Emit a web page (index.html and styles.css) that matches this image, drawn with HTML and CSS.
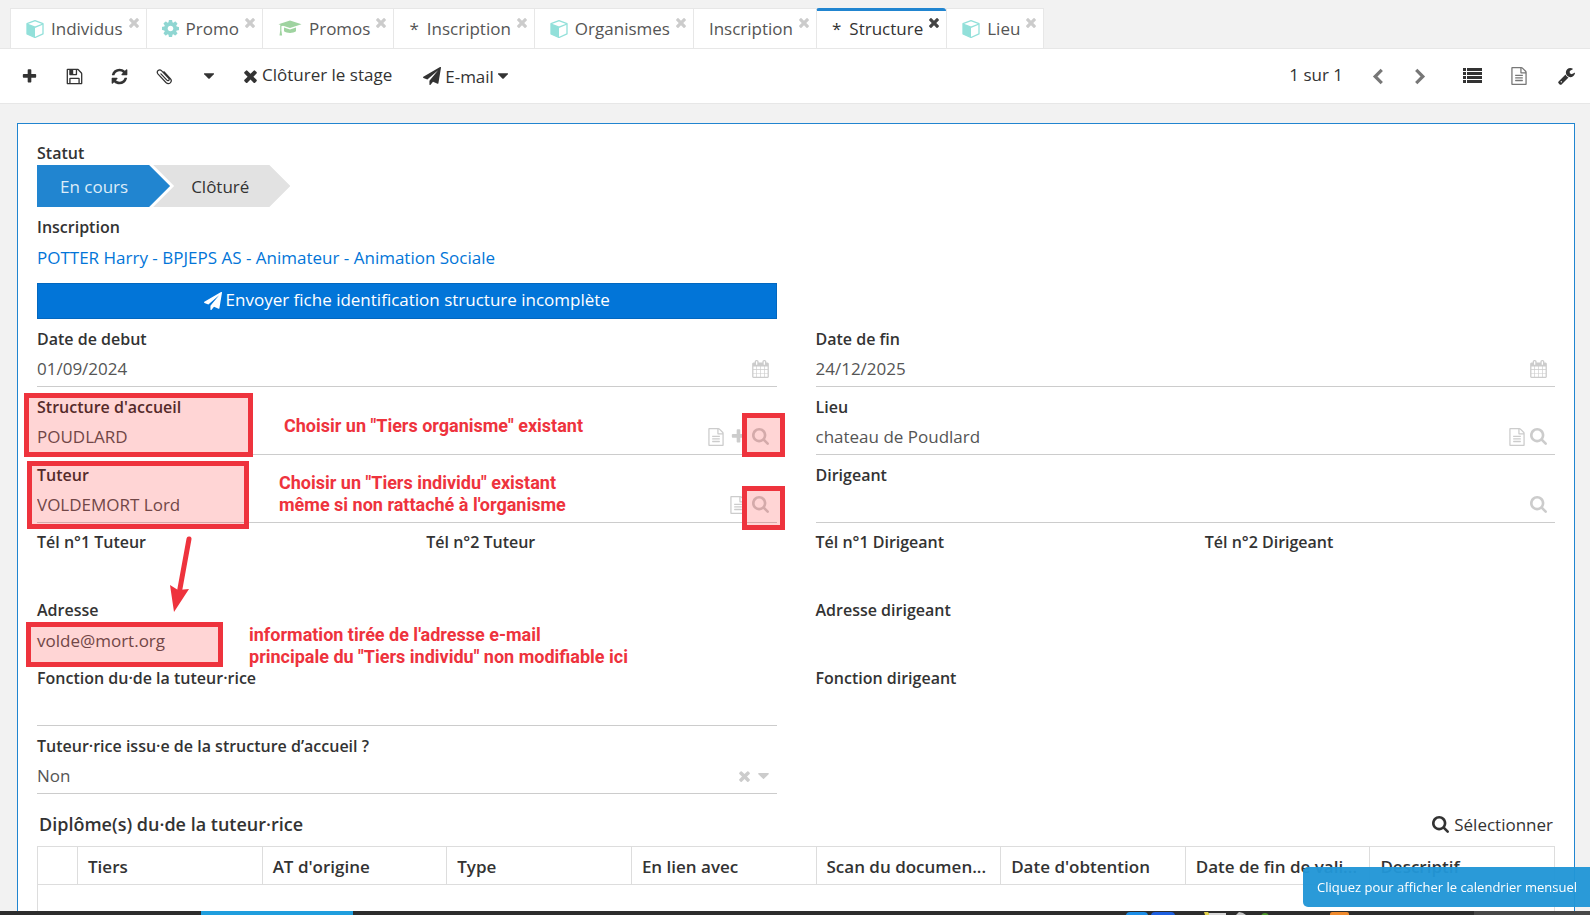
FILE: index.html
```html
<!DOCTYPE html>
<html lang="fr">
<head>
<meta charset="utf-8">
<title>Structure</title>
<link rel="stylesheet" href="styles.css">
</head>
<body>
<svg class="sprite" aria-hidden="true">
  <symbol id="i-plus" viewBox="0 0 1792 1792"><path d="M1600 736v192q0 40-28 68t-68 28h-416v416q0 40-28 68t-68 28h-192q-40 0-68-28t-28-68v-416h-416q-40 0-68-28t-28-68v-192q0-40 28-68t68-28h416v-416q0-40 28-68t68-28h192q40 0 68 28t28 68v416h416q40 0 68 28t28 68z"/></symbol>
  <symbol id="i-times" viewBox="302 238 1188 1316"><path d="M1490 1322q0 40-28 68l-136 136q-28 28-68 28t-68-28l-294-294-294 294q-28 28-68 28t-68-28l-136-136q-28-28-28-68t28-68l294-294-294-294q-28-28-28-68t28-68l136-136q28-28 68-28t68 28l294 294 294-294q28-28 68-28t68 28l136 136q28 28 28 68t-28 68l-294 294 294 294q28 28 28 68z"/></symbol>
  <symbol id="i-refresh" viewBox="64 64 1664 1664"><path d="M1639 1056q0 5-1 7-64 268-268 434.500t-478 166.500q-146 0-282.500-55t-243.500-157l-129 129q-19 19-45 19t-45-19-19-45v-448q0-26 19-45t45-19h448q26 0 45 19t19 45-19 45l-137 137q71 66 161 102t187 36q134 0 250-65t186-179q11-17 53-117 8-23 30-23h192q13 0 22.500 9.500t9.500 22.500zm25-800v448q0 26-19 45t-45 19h-448q-26 0-45-19t-19-45 19-45l138-138q-148-137-349-137-134 0-250 65t-186 179q-11 17-53 117-8 23-30 23h-199q-13 0-22.500-9.500t-9.500-22.500v-7q65-268 270-434.500t480-166.500q146 0 284 55.500t245 156.500l130-129q19-19 45-19t45 19 19 45z"/></symbol>
  <symbol id="i-save" viewBox="64 64 1664 1664"><path d="M512 1536h768v-384h-768v384zm896 0h128v-896q0-14-10-38.500t-20-34.500l-281-281q-10-10-34-20t-39-10v416q0 40-28 68t-68 28h-576q-40 0-68-28t-28-68v-416h-128v1280h128v-416q0-40 28-68t68-28h832q40 0 68 28t28 68v416zm-384-928v-320q0-13-9.500-22.500t-22.500-9.500h-192q-13 0-22.500 9.500t-9.500 22.500v320q0 13 9.500 22.500t22.500 9.500h192q13 0 22.500-9.500t9.500-22.500zm640 32v928q0 40-28 68t-68 28h-1344q-40 0-68-28t-28-68v-1344q0-40 28-68t68-28h928q40 0 88 20t76 48l280 280q28 28 48 76t20 88z"/></symbol>
  <symbol id="i-clip" viewBox="0 0 18 18"><path d="M5.200 6.200l6.300 6.600c1.400 1.500 3.300-.3 2-1.800L6 3C3.500.4-.2 3.700 2.200 6.400l8.300 8.900c3.200 3.200 7.500-.7 4.700-4.100L8.400 4" fill="none" stroke="currentColor" stroke-width="1.300" stroke-linecap="round"/></symbol>
  <symbol id="i-caret" viewBox="384 640 1024 576"><path d="M1408 704q0 26-19 45l-448 448q-19 19-45 19t-45-19l-448-448q-19-19-19-45t19-45 45-19h896q26 0 45 19t19 45z"/></symbol>
  <symbol id="i-plane" viewBox="0 0 1792 1792"><path d="M1764 11q33 24 27 64l-256 1536q-5 29-32 45-14 8-31 8-11 0-24-5l-453-185-242 295q-18 23-49 23-13 0-22-4-19-7-30.500-23.500t-11.500-36.500v-349l864-1059-1069 925-395-162q-37-14-40-55-2-40 32-59l1664-960q15-9 32-9 20 0 36 11z"/></symbol>
  <symbol id="i-left" viewBox="0 0 12 18"><path d="M10 2L3 9l7 7" fill="none" stroke="currentColor" stroke-width="3.400"/></symbol>
  <symbol id="i-right" viewBox="0 0 12 18"><path d="M2 2l7 7-7 7" fill="none" stroke="currentColor" stroke-width="3.400"/></symbol>
  <symbol id="i-list" viewBox="0 0 19 16"><path d="M0 0h3v3H0zM4 0h15v3H4zM0 4h3v3H0zM4 4h15v3H4zM0 8h3v3H0zM4 8h15v3H4zM0 12h3v3H0zM4 12h15v3H4z"/></symbol>
  <symbol id="i-file" viewBox="128 0 1536 1792"><path d="M1596 380q28 28 48 76t20 88v1152q0 40-28 68t-68 28h-1344q-40 0-68-28t-28-68v-1600q0-40 28-68t68-28h896q40 0 88 20t76 48zm-444-244v376h376q-10-29-22-41l-313-313q-12-12-41-22zm384 1528v-1024h-416q-40 0-68-28t-28-68v-416h-768v1536h1280zm-1024-864q0-14 9-23t23-9h704q14 0 23 9t9 23v64q0 14-9 23t-23 9h-704q-14 0-23-9t-9-23v-64zm736 224q14 0 23 9t9 23v64q0 14-9 23t-23 9h-704q-14 0-23-9t-9-23v-64q0-14 9-23t23-9h704zm0 256q14 0 23 9t9 23v64q0 14-9 23t-23 9h-704q-14 0-23-9t-9-23v-64q0-14 9-23t23-9h704z"/></symbol>
  <symbol id="i-wrench" viewBox="64 128 1664 1664"><path d="M448 1472q0-26-19-45t-45-19-45 19-19 45 19 45 45 19 45-19 19-45zm644-420l-682 682q-37 37-90 37-52 0-91-37l-106-108q-38-36-38-90 0-53 38-91l681-681q39 98 114.500 173.500t173.500 114.500zm634-435q0 39-23 106-47 134-164.500 217.500t-258.500 83.500q-185 0-316.500-131.500t-131.500-316.500 131.500-316.500 316.500-131.500q58 0 121.500 16.500t107.500 46.500q16 11 16 28t-16 28l-293 169v224l193 107q5-3 79-48.500t135.500-81 70.500-35.500q15 0 23.500 10t8.500 25z"/></symbol>
  <symbol id="i-search" viewBox="64 128 1664 1664"><path d="M1216 832q0-185-131.500-316.500t-316.500-131.500-316.500 131.500-131.500 316.500 131.500 316.500 316.500 131.500 316.500-131.500 131.500-316.500zm512 832q0 52-38 90t-90 38q-54 0-90-38l-343-342q-179 124-399 124-143 0-273.500-55.500t-225-150-150-225-55.500-273.500 55.500-273.500 150-225 225-150 273.500-55.500 273.500 55.500 225 150 150 225 55.500 273.500q0 220-124 399l343 343q37 37 37 90z"/></symbol>
  <symbol id="i-calendar" viewBox="64 0 1664 1792"><path d="M192 1664h288v-288h-288v288zm352 0h320v-288h-320v288zm-352-352h288v-320h-288v320zm352 0h320v-320h-320v320zm-352-384h288v-288h-288v288zm736 736h320v-288h-320v288zm-384-736h320v-288h-320v288zm768 736h288v-288h-288v288zm-384-352h320v-320h-320v320zm-352-864v-288q0-13-9.500-22.500t-22.500-9.500h-64q-13 0-22.500 9.500t-9.500 22.500v288q0 13 9.500 22.500t22.500 9.500h64q13 0 22.500-9.500t9.500-22.500zm736 864h288v-320h-288v320zm-384-384h320v-288h-320v288zm384 0h288v-288h-288v288zm32-480v-288q0-13-9.500-22.500t-22.500-9.500h-64q-13 0-22.500 9.500t-9.500 22.500v288q0 13 9.500 22.500t22.500 9.500h64q13 0 22.500-9.500t9.500-22.500zm384-64v1280q0 52-38 90t-90 38h-1408q-52 0-90-38t-38-90v-1280q0-52 38-90t90-38h128v-96q0-66 47-113t113-47h64q66 0 113 47t47 113v96h384v-96q0-66 47-113t113-47h64q66 0 113 47t47 113v96h128q52 0 90 38t38 90z"/></symbol>
  <symbol id="i-cog" viewBox="128 128 1536 1536"><path d="M1152 896q0-106-75-181t-181-75-181 75-75 181 75 181 181 75 181-75 75-181zm512-109v222q0 12-8 23t-20 13l-185 28q-19 54-39 91 35 50 107 138 10 12 10 25t-9 23q-27 37-99 108t-94 71q-12 0-26-9l-138-108q-44 23-91 38-16 136-29 186-7 28-36 28h-222q-14 0-24.500-8.500t-11.500-21.500l-28-184q-49-16-90-37l-141 107q-10 9-25 9-14 0-25-11-126-114-165-168-7-10-7-23 0-12 8-23 15-21 51-66.500t54-70.500q-27-50-41-99l-183-27q-13-2-21-12.500t-8-23.500v-222q0-12 8-23t19-13l186-28q14-46 39-92-40-57-107-138-10-12-10-24 0-10 9-23 26-36 98.500-107.500t94.500-71.500q13 0 26 10l138 107q44-23 91-38 16-136 29-186 7-28 36-28h222q14 0 24.500 8.500t11.500 21.500l28 184q49 16 90 37l142-107q9-9 24-9 13 0 25 10 129 119 165 170 7 8 7 22 0 12-8 23-15 21-51 66.500t-54 70.500q26 50 41 98l183 28q13 2 21 12.500t8 23.500z"/></symbol>
  <symbol id="i-cube" viewBox="0 0 18 18"><path d="M9 .700l8 3v10.200l-8 3.600-8-3.600V3.700z" fill="none" stroke="currentColor" stroke-width="1.300" stroke-linejoin="round"/><path d="M1 4l8 3.200v10.300L1 13.900z"/><path d="M1 4l8 3.200L17 4" fill="none" stroke="currentColor" stroke-width="1.300"/></symbol>
  <symbol id="i-cap" viewBox="0 0 24 17"><path d="M12 .500L23.500 4.200 12 8 .500 4.200z"/><path d="M6 7.500l6 2 6-2v3.800c-3 2.300-9 2.300-12 0z"/><path d="M2.200 5v1.500c1.200 0 2-.9 5-1.300L12 4.500 7 4.300C4 4.700 2.200 5 2.200 6v4.500L1.500 15.500h2.600L3.400 10.500V6z"/></symbol>
</svg>

<nav class="tabs">
  <div class="tab"><svg class="cube"><use href="#i-cube"/></svg><a href="#">Individus</a><button class="close" aria-label="Fermer"><svg><use href="#i-times"/></svg></button></div>
  <div class="tab"><svg class="cog"><use href="#i-cog"/></svg><a href="#">Promo</a><button class="close" aria-label="Fermer"><svg><use href="#i-times"/></svg></button></div>
  <div class="tab"><svg class="cap"><use href="#i-cap"/></svg><a href="#">Promos</a><button class="close" aria-label="Fermer"><svg><use href="#i-times"/></svg></button></div>
  <div class="tab"><span class="star">*</span><a href="#">Inscription</a><button class="close" aria-label="Fermer"><svg><use href="#i-times"/></svg></button></div>
  <div class="tab"><svg class="cube"><use href="#i-cube"/></svg><a href="#">Organismes</a><button class="close" aria-label="Fermer"><svg><use href="#i-times"/></svg></button></div>
  <div class="tab"><a href="#">Inscription</a><button class="close" aria-label="Fermer"><svg><use href="#i-times"/></svg></button></div>
  <div class="tab active"><span class="star">*</span><a href="#">Structure</a><button class="close" aria-label="Fermer"><svg><use href="#i-times"/></svg></button></div>
  <div class="tab"><svg class="cube"><use href="#i-cube"/></svg><a href="#">Lieu</a><button class="close" aria-label="Fermer"><svg><use href="#i-times"/></svg></button></div>
</nav>

<header class="toolbar">
  <button aria-label="Nouveau"><svg><use href="#i-plus"/></svg></button>
  <button aria-label="Enregistrer"><svg><use href="#i-save"/></svg></button>
  <button aria-label="Actualiser"><svg><use href="#i-refresh"/></svg></button>
  <button aria-label="Joindre"><svg><use href="#i-clip"/></svg></button>
  <button class="small" aria-label="Plus d'actions"><svg class="caret"><use href="#i-caret"/></svg></button>
  <button class="text"><svg class="cross"><use href="#i-times"/></svg><span class="raised">Clôturer le stage</span></button>
  <button class="text mail"><svg><use href="#i-plane"/></svg>E-mail<svg class="caret"><use href="#i-caret"/></svg></button>
  <div class="pager">
    <span class="raised">1 sur 1</span>
    <button class="grey" aria-label="Précédent"><svg class="chev"><use href="#i-left"/></svg></button>
    <button class="grey" aria-label="Suivant"><svg class="chev"><use href="#i-right"/></svg></button>
  </div>
  <div class="views">
    <button aria-label="Liste"><svg class="list"><use href="#i-list"/></svg></button>
    <button class="grey" aria-label="Formulaire"><svg class="doc"><use href="#i-file"/></svg></button>
    <button class="tools" aria-label="Outils"><svg><use href="#i-wrench"/></svg></button>
  </div>
</header>

<main class="card">
  <form class="form">
    <div class="field wide">
      <span class="label">Statut</span>
      <div class="steps"><span class="step current">En cours</span><span class="step next">Clôturé</span></div>
    </div>
    <div class="field wide">
      <span class="label">Inscription</span>
      <p class="value"><a href="#">POTTER Harry - BPJEPS AS - Animateur - Animation Sociale</a></p>
    </div>
    <button type="button" class="send"><svg><use href="#i-plane"/></svg><span class="raised">Envoyer fiche identification structure incomplète</span></button>

    <div class="field left">
      <label class="label" for="debut">Date de debut</label>
      <div class="control"><input id="debut" value="01/09/2024"><button type="button" aria-label="Calendrier"><svg class="cal"><use href="#i-calendar"/></svg></button></div>
    </div>
    <div class="field">
      <label class="label" for="fin">Date de fin</label>
      <div class="control"><input id="fin" value="24/12/2025"><button type="button" aria-label="Calendrier"><svg class="cal"><use href="#i-calendar"/></svg></button></div>
    </div>

    <div class="field">
      <label class="label" for="structure">Structure d'accueil</label>
      <div class="control"><input id="structure" value="POUDLARD"><button type="button" aria-label="Ouvrir"><svg class="doc"><use href="#i-file"/></svg></button><button type="button" aria-label="Ajouter"><svg><use href="#i-plus"/></svg></button><button type="button" aria-label="Rechercher"><svg><use href="#i-search"/></svg></button></div>
      <span class="mark mark-structure"></span>
      <span class="mark mark-search"></span>
      <p class="note note-structure">Choisir un "Tiers organisme" existant</p>
    </div>
    <div class="field">
      <label class="label" for="lieu">Lieu</label>
      <div class="control"><input id="lieu" value="chateau de Poudlard"><button type="button" aria-label="Ouvrir"><svg class="doc"><use href="#i-file"/></svg></button><button type="button" aria-label="Rechercher"><svg><use href="#i-search"/></svg></button></div>
    </div>

    <div class="field">
      <label class="label" for="tuteur">Tuteur</label>
      <div class="control"><input id="tuteur" value="VOLDEMORT Lord"><button type="button" aria-label="Ouvrir"><svg class="doc"><use href="#i-file"/></svg></button><button type="button" aria-label="Rechercher"><svg><use href="#i-search"/></svg></button></div>
      <span class="mark mark-tuteur"></span>
      <span class="mark mark-search low"></span>
      <p class="note note-tuteur">Choisir un "Tiers individu" existant<br>même si non rattaché à l'organisme</p>
      <svg class="arrow" viewBox="0 0 26 78"><path d="M19 3L9 58" fill="none" stroke="#ee333d" stroke-width="5" stroke-linecap="round"/><path d="M0 49l8 5 11-1L4 76z"/></svg>
    </div>
    <div class="field">
      <label class="label" for="dirigeant">Dirigeant</label>
      <div class="control"><input id="dirigeant"><button type="button" aria-label="Rechercher"><svg><use href="#i-search"/></svg></button></div>
    </div>

    <div class="pair"><span class="label">Tél n°1 Tuteur</span><span class="label">Tél n°2 Tuteur</span></div>
    <div class="pair"><span class="label">Tél n°1 Dirigeant</span><span class="label">Tél n°2 Dirigeant</span></div>

    <div class="field">
      <span class="label">Adresse</span>
      <p class="value">volde@mort.org</p>
      <span class="mark mark-adresse"></span>
      <p class="note note-adresse">information tirée de l'adresse e-mail<br>principale du "Tiers individu" non modifiable ici</p>
    </div>
    <div class="field"><span class="label">Adresse dirigeant</span></div>

    <div class="field">
      <label class="label" for="fonction">Fonction du·de la tuteur·rice</label>
      <div class="control"><input id="fonction"></div>
    </div>
    <div class="field"><span class="label">Fonction dirigeant</span></div>

    <div class="field">
      <label class="label" for="issu">Tuteur·rice issu·e de la structure d’accueil ?</label>
      <div class="control choice"><select id="issu"><option>Non</option></select><button type="button" aria-label="Effacer"><svg class="clear"><use href="#i-times"/></svg></button><svg class="caret"><use href="#i-caret"/></svg></div>
    </div>
  </form>

  <section class="panel">
    <div class="panel-head"><h2>Diplôme(s) du·de la tuteur·rice</h2><button class="select"><svg><use href="#i-search"/></svg>Sélectionner</button></div>
    <table>
      <thead><tr><th class="pick"></th><th>Tiers</th><th>AT d'origine</th><th>Type</th><th>En lien avec</th><th>Scan du documen...</th><th>Date d'obtention</th><th>Date de fin de vali...</th><th>Descriptif</th></tr></thead>
      <tbody><tr><td colspan="9"></td></tr></tbody>
    </table>
  </section>
</main>

<div class="toast" role="status">Cliquez pour afficher le calendrier mensuel</div>
<svg class="taskbar" aria-hidden="true">
  <rect x="201" width="152" height="4" fill="#1f9ede"/>
  <rect x="1126" y="1" width="22" height="8" rx="4" fill="#1c8ee8"/>
  <rect x="1151" y="1" width="24" height="8" rx="4" fill="#1d5fe0"/>
  <path d="M1204 1h4l2 3h-5z" fill="#e3d34c"/>
  <rect x="1209" y="2" width="17" height="3" fill="#d8d8d8"/>
  <path d="M1236 4l3-3 4 1 3 2z" fill="#c8c8c8"/>
  <circle cx="1265" cy="6" r="4" fill="#4f9a2c"/>
  <rect x="1330" y="1" width="19" height="6" rx="2" fill="#f08a2c"/>
  <rect x="1474" width="400" height="4" fill="#484848"/>
</svg>
</body>
</html>
```

FILE: styles.css
```css
* { box-sizing: border-box; }

html, body { height: 100%; }

body {
  margin: 0;
  overflow: hidden;
  display: flex;
  flex-direction: column;
  background: #f2f2f2;
  color: #333;
  font: 17px/23px "Open Sans", "Noto Sans", sans-serif;
}

a { color: inherit; text-decoration: none; }
p, h2 { margin: 0; }
svg { width: 17px; height: 17px; fill: currentColor; flex: none; }
.sprite { position: absolute; width: 0; height: 0; }

button {
  display: flex;
  align-items: center;
  margin: 0;
  padding: 0;
  border: 0;
  background: none;
  color: inherit;
  font: inherit;
  cursor: pointer;
}

.caret { width: 10px; height: 6px; }
svg.doc { width: 16px; height: 18px; }
.raised { padding-bottom: 3px; }

/* Tabs */
.tabs {
  display: flex;
  flex: none;
  padding: 8px 10px 0;
  border-bottom: 1px solid #e7e7e7;
}

.tab {
  display: flex;
  align-items: center;
  height: 40px;
  padding: 0 7px 0 15px;
  background: #fff;
  border: 1px solid #e7e7e7;
  border-width: 1px 0 0 1px;
  color: #555;
}

.tab:last-child { border-right-width: 1px; }
.tab > a, .star { padding-bottom: 1px; }
.tab > svg { width: 18px; height: 18px; margin-right: 7px; color: #92e0da; }
.tab > .cog { width: 17px; height: 17px; color: #8fd6d2; }
.tab > .cap { width: 24px; height: 17px; color: #9fd3a0; }
.star { margin-right: 8px; }
.tab.active { border-top: 3px solid #2185d0; border-radius: 3px 3px 0 0; color: #333; }
.active > a, .active .star { padding-bottom: 3px; }
.close { align-self: flex-start; margin: 8px 0 0 6px; color: #ccc; }
.close svg { width: 10px; height: 11px; }
.active .close { margin-top: 6px; color: #444; }

/* Toolbar */
.toolbar {
  display: flex;
  flex: none;
  align-items: center;
  gap: 28px;
  height: 55px;
  padding: 0 15px 0 21px;
  background: #fff;
  border-bottom: 1px solid #e7e7e7;
}

.toolbar .text { gap: 5px; }
.toolbar .small { width: 15px; justify-content: center; }
.toolbar .cross { width: 13px; height: 14px; }
.toolbar .mail { gap: 4px; margin-left: 3px; }
.mail > svg:first-child { width: 18px; height: 18px; }
.grey { color: #777; }
.pager { display: flex; align-items: center; gap: 28px; margin-left: auto; }
.pager .chev { width: 14px; height: 17px; }
.list { width: 19px; height: 16px; }
.views { display: flex; align-items: center; gap: 29px; margin-left: 8px; }
.tools { margin-left: 2px; }

/* Record card */
.card {
  flex: 1 1 0;
  min-height: 0;
  overflow: hidden;
  margin: 19px 15px 0 17px;
  padding: 9px 19px 0;
  background: #fff;
  border: 1px solid #2185d0;
  border-bottom: 0;
}

.form { display: grid; grid-template-columns: 1fr 1fr; column-gap: 39px; }
.field { position: relative; padding-top: 9px; }
.field.wide { grid-column: 1 / -1; }
.left { grid-column: 1; }
.label { display: block; font-size: 16px; font-weight: 600; line-height: 23px; }
.value { height: 36px; line-height: 38px; color: #555; }
.value a { color: #0275d8; }

.pair {
  display: grid;
  grid-template-columns: 1fr 1fr;
  column-gap: 39px;
  height: 67px;
  padding-top: 8px;
}

.steps { display: flex; }
.step { height: 42px; line-height: 43px; }

.current {
  padding: 0 42px 0 23px;
  background: #2185d0;
  color: #dcecf8;
  clip-path: polygon(0 0, calc(100% - 21px) 0, 100% 50%, calc(100% - 21px) 100%, 0 100%);
}

.next {
  margin-left: -17px;
  padding: 0 41px 0 38px;
  background: #e2e2e2;
  clip-path: polygon(0 0, calc(100% - 21px) 0, 100% 50%, calc(100% - 21px) 100%, 0 100%, 21px 50%);
}

.send {
  justify-content: center;
  gap: 4px;
  height: 36px;
  margin-top: 8px;
  background: #0275d8;
  border: 1px solid #0267bf;
  color: #fff;
}

.send svg { width: 18px; height: 18px; }

.control {
  display: flex;
  align-items: center;
  gap: 5px;
  height: 36px;
  padding-right: 8px;
  border-bottom: 1px solid #ccc;
  color: #ccc;
}

.control button { width: 17px; justify-content: center; }
.control .cal { height: 18px; }
.control .clear { width: 11px; height: 12px; }
.choice .caret { width: 11px; }

input, select {
  flex: 1;
  min-width: 0;
  height: 35px;
  padding: 0;
  border: 0;
  outline: 0;
  background: none;
  color: #555;
  font: inherit;
  appearance: none;
}

/* Related list */
.panel-head {
  display: flex;
  align-items: center;
  justify-content: space-between;
  height: 52px;
  padding: 8px 2px 0;
}

h2 { font-size: 18px; font-weight: 600; line-height: 23px; }
.select { gap: 5px; }

table { width: 100%; border-collapse: collapse; table-layout: fixed; }
th, td { border: 1px solid #ddd; }

th {
  height: 38px;
  padding: 2px 10px 0;
  overflow: hidden;
  font-size: 17px;
  font-weight: 600;
  text-align: left;
  text-overflow: ellipsis;
  white-space: nowrap;
}

.pick { width: 40px; }
td { height: 29px; }

/* Annotations laid over the form */
.mark {
  position: absolute;
  border: 5px solid #ee333d;
  background: rgba(255, 0, 0, 0.165);
  pointer-events: none;
}

.mark-structure { left: -13px; top: 6px; width: 229px; height: 64px; }
.mark-tuteur { left: -10px; top: 6px; width: 222px; height: 68px; }
.mark-adresse { left: -11px; top: 32px; width: 197px; height: 45px; }
.mark-search { right: -8px; top: 26px; width: 43px; height: 44px; }
.mark-search.low { top: 31px; }

.note {
  position: absolute;
  color: #ee333d;
  font: bold 18px/22px Roboto, "Liberation Sans", sans-serif;
  white-space: nowrap;
}

.note-structure { left: 247px; top: 28px; }
.note-tuteur { left: 242px; top: 17px; }
.note-adresse { left: 212px; top: 34px; }
.arrow { position: absolute; left: 133px; top: 81px; width: 26px; height: 78px; fill: #ee333d; }

/* Desktop overlays */
.toast {
  position: fixed;
  right: 0;
  bottom: 8px;
  padding: 9px 13px 9px 14px;
  border-radius: 5px 0 0 5px;
  background: rgba(33, 150, 214, 0.96);
  color: #fff;
  font-size: 13px;
  line-height: 22px;
}

.taskbar {
  position: fixed;
  left: 0;
  bottom: 0;
  width: 100%;
  height: 4px;
  background: #2d2d2d;
}
```
